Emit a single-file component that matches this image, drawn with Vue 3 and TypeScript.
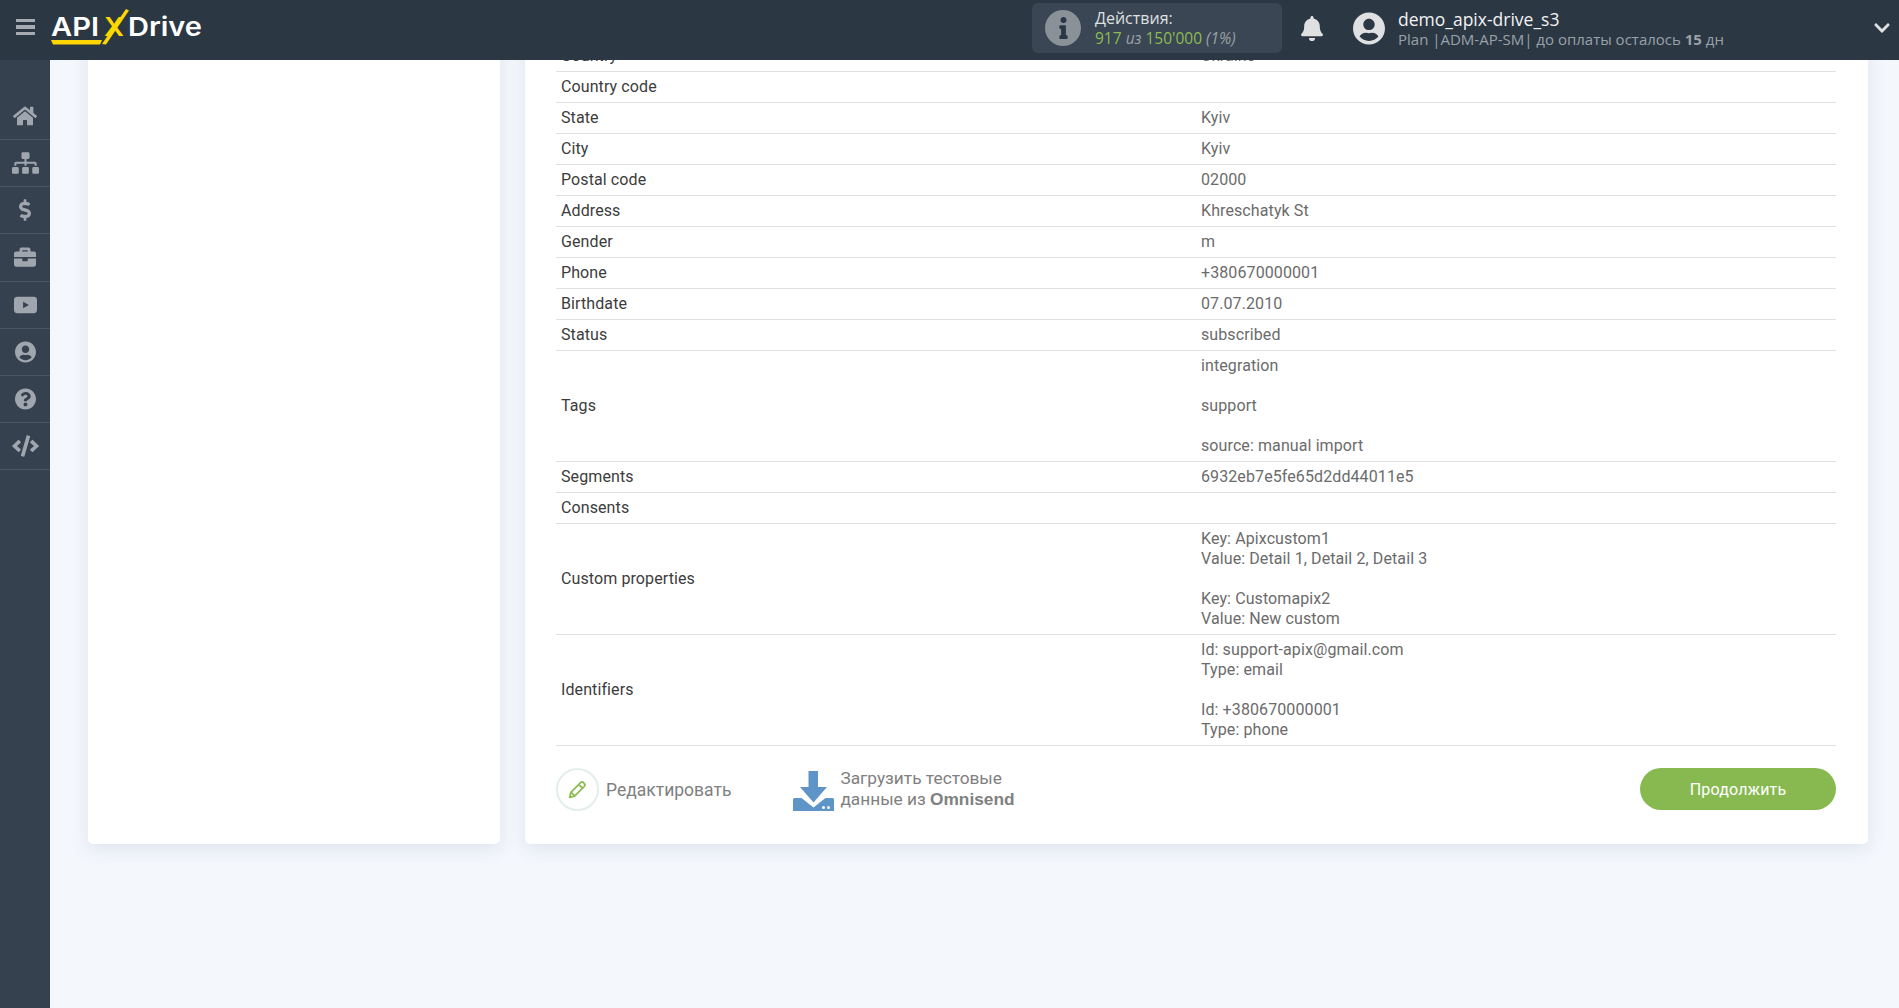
<script setup lang="ts">
interface Row { label: string; value: string }
interface NavIcon { name: string; box: string; d: string; w: number }

const rows: Row[] = [
  { label: 'Country', value: 'Ukraine' },
  { label: 'Country code', value: '' },
  { label: 'State', value: 'Kyiv' },
  { label: 'City', value: 'Kyiv' },
  { label: 'Postal code', value: '02000' },
  { label: 'Address', value: 'Khreschatyk St' },
  { label: 'Gender', value: 'm' },
  { label: 'Phone', value: '+380670000001' },
  { label: 'Birthdate', value: '07.07.2010' },
  { label: 'Status', value: 'subscribed' },
  { label: 'Tags', value: 'integration\n\nsupport\n\nsource: manual import' },
  { label: 'Segments', value: '6932eb7e5fe65d2dd44011e5' },
  { label: 'Consents', value: '' },
  { label: 'Custom properties', value: 'Key: Apixcustom1\nValue: Detail 1, Detail 2, Detail 3\n\nKey: Customapix2\nValue: New custom' },
  { label: 'Identifiers', value: 'Id: support-apix@gmail.com\nType: email\n\nId: +380670000001\nType: phone' },
]

const nav: NavIcon[] = [
  { name: 'home', box: '0 0 576 512', w: 24, d: 'M280.37 148.26L96 300.11V464a16 16 0 0 0 16 16l112.06-.29a16 16 0 0 0 15.92-16V368a16 16 0 0 1 16-16h64a16 16 0 0 1 16 16v95.64a16 16 0 0 0 16 16.05L464 480a16 16 0 0 0 16-16V300L295.67 148.26a12.19 12.19 0 0 0-15.3 0zM571.6 251.47L488 182.56V44.05a12 12 0 0 0-12-12h-56a12 12 0 0 0-12 12v72.61L318.47 43a48 48 0 0 0-61 0L4.34 251.47a12 12 0 0 0-1.6 16.9l25.5 31A12 12 0 0 0 45.15 301l235.22-193.74a12.19 12.19 0 0 1 15.3 0L530.9 301a12 12 0 0 0 16.9-1.6l25.5-31a12 12 0 0 0-1.7-16.93z' },
  { name: 'sitemap', box: '0 0 640 512', w: 27, d: 'M128 352H32c-17.67 0-32 14.33-32 32v96c0 17.67 14.33 32 32 32h96c17.67 0 32-14.33 32-32v-96c0-17.67-14.33-32-32-32zm-24-80h192v48h48v-48h192v48h48v-57.59c0-21.17-17.23-38.41-38.41-38.41H344v-64h40c17.67 0 32-14.33 32-32V32c0-17.67-14.33-32-32-32H256c-17.67 0-32 14.33-32 32v96c0 17.67 14.33 32 32 32h40v64H94.41C73.23 224 56 241.23 56 262.41V320h48v-48zm264 80h-96c-17.67 0-32 14.33-32 32v96c0 17.67 14.33 32 32 32h96c17.67 0 32-14.33 32-32v-96c0-17.67-14.33-32-32-32zm240 0h-96c-17.67 0-32 14.33-32 32v96c0 17.67 14.33 32 32 32h96c17.67 0 32-14.33 32-32v-96c0-17.67-14.33-32-32-32z' },
  { name: 'dollar', box: '0 0 288 512', w: 12, d: 'M209.2 233.4l-108-31.6C88.7 198.2 80 186.5 80 173.5c0-16.3 13.2-29.5 29.5-29.5h66.3c12.2 0 24.2 3.7 34.2 10.5 6.1 4.1 14.3 3.1 19.5-2l34.8-34c7.1-6.9 6.1-18.4-1.8-24.5C238 74.8 207.4 64.1 176 64V16c0-8.8-7.2-16-16-16h-32c-8.8 0-16 7.2-16 16v48h-2.5C45.8 64-5.4 118.7.5 183.6c4.2 46.1 39.4 83.6 83.8 96.6l102.5 30c12.5 3.7 21.2 15.3 21.2 28.3 0 16.3-13.2 29.5-29.5 29.5h-66.3C100 368 88 364.3 78 357.5c-6.1-4.1-14.3-3.1-19.5 2l-34.8 34c-7.1 6.9-6.1 18.4 1.8 24.5 24.5 19.2 55.1 29.9 86.5 30v48c0 8.8 7.2 16 16 16h32c8.8 0 16-7.2 16-16v-48.2c46.6-.9 90.3-28.6 105.7-72.7 21.5-61.6-14.6-124.8-72.5-141.7z' },
  { name: 'briefcase', box: '0 0 512 512', w: 22, d: 'M320 336c0 8.84-7.16 16-16 16h-96c-8.84 0-16-7.16-16-16v-48H0v144c0 25.6 22.4 48 48 48h416c25.6 0 48-22.4 48-48V288H320v48zm144-208h-80V80c0-25.6-22.4-48-48-48H176c-25.6 0-48 22.4-48 48v48H48c-25.6 0-48 22.4-48 48v80h512v-80c0-25.6-22.4-48-48-48zm-144 0H192V96h128v32z' },
  { name: 'video', box: '0 0 24 17', w: 23, d: 'M3.5 0h17A3.5 3.5 0 0 1 24 3.5v10a3.5 3.5 0 0 1-3.5 3.5h-17A3.5 3.5 0 0 1 0 13.5v-10A3.5 3.5 0 0 1 3.5 0zM9.5 5v7l6-3.5z' },
  { name: 'user', box: '0 0 496 512', w: 21, d: 'M248 8C111 8 0 119 0 256s111 248 248 248 248-111 248-248S385 8 248 8zm0 96c48.6 0 88 39.4 88 88s-39.4 88-88 88-88-39.4-88-88 39.4-88 88-88zm0 344c-58.7 0-111.3-26.6-146.5-68.2 18.8-35.4 55.6-59.8 98.5-59.8 2.4 0 4.8.4 7.1 1.1 13 4.2 26.6 6.9 40.9 6.9 14.3 0 28-2.7 40.9-6.9 2.3-.7 4.7-1.1 7.1-1.1 42.9 0 79.7 24.4 98.5 59.8C359.3 421.4 306.7 448 248 448z' },
  { name: 'question', box: '8 8 496 496', w: 21, d: 'M504 256c0 136.997-111.043 248-248 248S8 392.997 8 256C8 119.083 119.043 8 256 8s248 111.083 248 248zM262.655 90c-54.497 0-89.255 22.957-116.549 63.758-3.536 5.286-2.353 12.415 2.715 16.258l34.699 26.31c5.205 3.947 12.621 3.008 16.665-2.122 17.864-22.658 30.113-35.797 57.303-35.797 20.429 0 45.698 13.148 45.698 32.958 0 14.976-12.363 22.667-32.534 33.976C247.128 238.528 216 254.941 216 296v4c0 6.627 5.373 12 12 12h56c6.627 0 12-5.373 12-12v-1.333c0-28.462 83.186-29.647 83.186-106.667 0-58.002-60.165-102-116.531-102zM256 338c-25.365 0-46 20.635-46 46 0 25.364 20.635 46 46 46s46-20.636 46-46c0-25.365-20.635-46-46-46z' },
  { name: 'code', box: '0 0 640 512', w: 27, d: 'M278.9 511.5l-61-17.7c-6.4-1.8-10-8.5-8.2-14.9L346.2 8.7c1.8-6.4 8.5-10 14.9-8.2l61 17.7c6.4 1.8 10 8.5 8.2 14.9L293.8 503.3c-1.9 6.4-8.5 10.1-14.9 8.2zm-114-112.2l43.5-46.4c4.6-4.9 4.3-12.7-.8-17.2L117 256l90.6-79.7c5.1-4.5 5.5-12.3.8-17.2l-43.5-46.4c-4.5-4.8-12.1-5.1-17-.5L3.8 247.2c-5.1 4.7-5.1 12.8 0 17.5l144.1 135.1c4.9 4.6 12.5 4.4 17-.5zm327.2.6l144.1-135.1c5.1-4.7 5.1-12.8 0-17.5L492.1 112.1c-4.8-4.5-12.4-4.3-17 .5L431.6 159c-4.6 4.9-4.3 12.7.8 17.2L523 256l-90.6 79.7c-5.1 4.5-5.5 12.3-.8 17.2l43.5 46.4c4.5 4.9 12.1 5.1 17 .6z' },
]
</script>

<template>
  <div class="app">
    <header class="topbar">
      <div class="burger"><i></i><i></i><i></i></div>
      <svg class="logo" viewBox="0 0 160 60" width="160" height="60" role="img" aria-label="ApiX Drive">
        <text x="1" y="36" class="logo-white" textLength="48" lengthAdjust="spacingAndGlyphs">API</text>
        <text x="54" y="36" class="logo-yellow" textLength="20" lengthAdjust="spacingAndGlyphs">X</text>
        <polygon points="52,44 76,9 79,10.5 56,44.5" fill="#ffd600" />
        <polygon points="1,40 52,40 50,44.5 3,44.5" fill="#ffd600" />
        <text x="78" y="36" class="logo-white" textLength="74" lengthAdjust="spacingAndGlyphs">Drive</text>
      </svg>

      <div class="actions">
        <span class="info-dot">
          <svg viewBox="0 0 192 512" width="9" height="22"><path fill="#2c3744" d="M20 424.229h20V279.771H20c-11.046 0-20-8.954-20-20V212c0-11.046 8.954-20 20-20h112c11.046 0 20 8.954 20 20v212.229h20c11.046 0 20 8.954 20 20V492c0 11.046-8.954 20-20 20H20c-11.046 0-20-8.954-20-20v-47.771c0-11.046 8.954-20 20-20zM96 0C56.235 0 24 32.235 24 72s32.235 72 72 72 72-32.235 72-72S135.764 0 96 0z" /></svg>
        </span>
        <div class="actions-text">
          <div class="actions-title">Действия:</div>
          <div class="actions-count"><b>917</b> <em>из</em> <b>150'000</b> <em>(1%)</em></div>
        </div>
      </div>

      <svg class="bell" viewBox="0 0 448 512" width="22" height="25"><path fill="#dfe0e1" d="M224 512c35.32 0 63.97-28.65 63.97-64H160.03c0 35.35 28.65 64 63.97 64zm215.39-149.71c-19.32-20.76-55.47-51.99-55.47-154.29 0-77.7-54.48-139.9-127.94-155.16V32c0-17.67-14.32-32-31.98-32s-31.98 14.33-31.98 32v20.84C118.56 68.1 64.08 130.3 64.08 208c0 102.3-36.15 133.53-55.47 154.29-6 6.45-8.66 14.16-8.61 21.71.11 16.4 12.98 32 32.1 32h383.8c19.12 0 32-15.6 32.1-32 .05-7.55-2.61-15.27-8.61-21.71z" /></svg>

      <svg class="avatar" viewBox="0 0 496 512" width="32" height="33"><path fill="#dfe0e1" d="M248 8C111 8 0 119 0 256s111 248 248 248 248-111 248-248S385 8 248 8zm0 96c48.6 0 88 39.4 88 88s-39.4 88-88 88-88-39.4-88-88 39.4-88 88-88zm0 344c-58.7 0-111.3-26.6-146.5-68.2 18.8-35.4 55.6-59.8 98.5-59.8 2.4 0 4.8.4 7.1 1.1 13 4.2 26.6 6.9 40.9 6.9 14.3 0 28-2.7 40.9-6.9 2.3-.7 4.7-1.1 7.1-1.1 42.9 0 79.7 24.4 98.5 59.8C359.3 421.4 306.7 448 248 448z" /></svg>
      <div class="account">
        <div class="account-name">demo_apix-drive_s3</div>
        <div class="account-plan">Plan |ADM-AP-SM| до оплаты осталось <b>15</b> дн</div>
      </div>

      <svg class="chevron" viewBox="0 0 448 512" width="16" height="18"><path fill="#dfe0e1" d="M207.029 381.476L12.686 187.132c-9.373-9.373-9.373-24.569 0-33.941l22.667-22.667c9.357-9.357 24.522-9.375 33.901-.04L224 284.505l154.745-154.021c9.379-9.335 24.544-9.317 33.901.04l22.667 22.667c9.373 9.373 9.373 24.569 0 33.941L240.971 381.476c-9.373 9.372-24.569 9.372-33.942 0z" /></svg>
    </header>

    <div class="body">
      <aside class="sidebar">
        <div v-for="item in nav" :key="item.name" class="nav-item">
          <svg :viewBox="item.box" :width="item.w" height="24"><path fill="#a0a6ad" fill-rule="evenodd" :d="item.d" /></svg>
        </div>
      </aside>

      <main class="main">
        <div class="columns">
          <section class="card card-left"></section>
          <section class="card card-right">
            <table class="data">
              <tbody>
                <tr v-for="row in rows" :key="row.label">
                  <td class="label">{{ row.label }}</td>
                  <td class="value">{{ row.value }}</td>
                </tr>
              </tbody>
            </table>

            <div class="footer">
              <div class="edit">
                <span class="edit-circle">
                  <svg viewBox="0 0 24 24" width="21" height="21" fill="none" stroke="#8cbb55" stroke-width="2" stroke-linejoin="round"><path d="M3 21l1.4-5.6L15.6 4.2a2.2 2.2 0 0 1 3.1 0l1.1 1.1a2.2 2.2 0 0 1 0 3.1L8.600 19.600z" /><path d="M13.500 6.300l4.200 4.200M5 15.500l3.500 3.500" /></svg>
                </span>
                <span class="edit-text">Редактировать</span>
              </div>
              <div class="load">
                <svg viewBox="0 0 41 40" width="41" height="40">
                  <path fill="#5f94c8" d="M15.500 0h9.500v16h9L20.500 31.500 7 16h8.500z" />
                  <path fill="#5f94c8" d="M1.500 27h7l12 9.500 12-9.500h7a1.500 1.500 0 0 1 1.500 1.500V40H0V28.500A1.500 1.500 0 0 1 1.500 27z" />
                  <circle cx="30.500" cy="36.500" r="1.500" fill="#fff" />
                  <circle cx="35.500" cy="36.500" r="1.500" fill="#fff" />
                </svg>
                <div class="load-text">Загрузить тестовые<br />данные из <b>Omnisend</b></div>
              </div>
              <button class="next" type="button">Продолжить</button>
            </div>
          </section>
        </div>
      </main>
    </div>
  </div>
</template>

<style>
html, body { margin: 0; padding: 0; background: #f4f7fc; overflow: hidden; }
</style>

<style scoped>
.app {
  display: flex;
  flex-direction: column;
  height: 1008px;
  width: 1899px;
  overflow: hidden;
  font-family: Roboto, "Liberation Sans", sans-serif;
  background: #f4f7fc;
}

.topbar {
  position: relative;
  z-index: 2;
  flex: none;
  display: flex;
  align-items: center;
  height: 60px;
  background: #2c3744;
  font-family: "Open Sans", "Noto Sans", sans-serif;
}
.burger {
  display: flex;
  flex-direction: column;
  gap: 3px;
  width: 19px;
  margin-left: 16px;
  margin-bottom: 6px;
}
.burger i { display: block; height: 3.300px; background: #a6abb1; }
.logo { flex: none; margin-left: 15px; }
.logo-white { font: 600 26px Inter, sans-serif; fill: #fff; }
.logo-yellow { font: 600 26px Inter, sans-serif; fill: #ffd600; }

.actions {
  display: flex;
  align-items: center;
  width: 250px;
  height: 50px;
  margin: 0 0 4px 822px;
  background: #3a4653;
  border-radius: 6px;
  box-sizing: border-box;
  padding-left: 13px;
}
.info-dot {
  flex: none;
  display: flex;
  align-items: center;
  justify-content: center;
  width: 36px;
  height: 36px;
  border-radius: 50%;
  background: #8a9199;
}
.actions-text { margin-left: 14px; color: #dfe0e1; }
.actions-title { font-size: 16px; line-height: 20px; }
.actions-count { font-size: 15.500px; line-height: 21px; }
.actions-count b { font-weight: 400; color: #8cbb55; }
.actions-count em { color: #9aa0a6; }

.bell { flex: none; margin-left: 19px; margin-bottom: 3px; }
.avatar { flex: none; margin-left: 30px; margin-bottom: 4px; }
.account { margin-left: 13px; margin-bottom: 3px; white-space: nowrap; }
.account-name { font-size: 17.500px; line-height: 22px; color: #f1f2f3; }
.account-plan { font-size: 15px; line-height: 19px; color: #9aa1a8; }
.account-plan b { font-weight: 700; }
.chevron { position: absolute; right: 9px; top: 19px; }

.body { flex: 1; display: flex; min-height: 0; }

.sidebar {
  flex: none;
  width: 50px;
  box-sizing: border-box;
  padding-top: 33px;
  background: #364150;
}
.nav-item {
  display: flex;
  align-items: center;
  justify-content: center;
  height: 47.150px;
  box-sizing: border-box;
  border-bottom: 1px solid #4a5564;
}

.main { flex: 1; min-width: 0; overflow: hidden; }
.columns {
  display: flex;
  gap: 25px;
  margin-top: -19px;
  padding: 0 31px 0 38px;
}
.card {
  background: #fff;
  border-radius: 0 0 5px 5px;
  box-shadow: 0 5px 18px rgba(70, 90, 130, 0.12);
}
.card-left { flex: none; width: 412px; }
.card-right {
  flex: 1;
  min-width: 0;
  box-sizing: border-box;
  padding: 0 32px 33px 31px;
}

.data {
  width: 100%;
  border-collapse: collapse;
  table-layout: fixed;
  font-size: 16px;
  line-height: 20px;
  letter-spacing: 0.1px;
}
.data td {
  padding: 5px;
  border-bottom: 1px solid #e0e0e0;
  vertical-align: middle;
}
.label { color: #3c3c3c; }
.value { color: #6b6b6b; white-space: pre-line; }

.footer {
  display: flex;
  align-items: flex-start;
  padding-top: 22px;
}
.edit { display: flex; align-items: center; }
.edit-circle {
  display: flex;
  align-items: center;
  justify-content: center;
  width: 43px;
  height: 43px;
  box-sizing: border-box;
  border: 2px solid #e4eeea;
  border-radius: 50%;
}
.edit-text { margin-left: 7px; font-size: 17.500px; color: #808080; }
.load { display: flex; align-items: center; margin-left: 62px; margin-top: 3px; }
.load-text { margin-left: 6px; margin-top: -4px; font-size: 17.300px; line-height: 21px; color: #808080; }
.load-text b { font-family: "Liberation Sans", Arial, sans-serif; }
.next {
  width: 196px;
  height: 42px;
  margin-left: auto;
  border: 0;
  border-radius: 21px;
  background: #88b951;
  color: #fff;
  font: 400 16px Roboto, sans-serif;
  letter-spacing: 0.2px;
}
</style>
